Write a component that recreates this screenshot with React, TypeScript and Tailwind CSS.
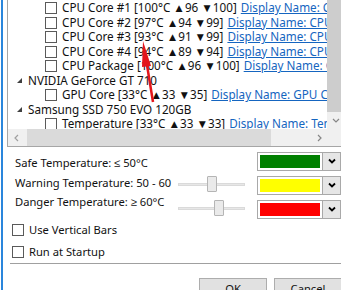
import type { ReactNode } from 'react';

type Row =
  | { kind: 'group'; label: string }
  | { kind: 'sensor'; label: string; link: string };

const rows: Row[] = [
  { kind: 'sensor', label: 'CPU Core #1 [100°C ▲96 ▼100]', link: 'Display Name: CPU Core #1' },
  { kind: 'sensor', label: 'CPU Core #2 [97°C ▲94 ▼99]', link: 'Display Name: CPU Core #2' },
  { kind: 'sensor', label: 'CPU Core #3 [93°C ▲91 ▼99]', link: 'Display Name: CPU Core #3' },
  { kind: 'sensor', label: 'CPU Core #4 [94°C ▲89 ▼94]', link: 'Display Name: CPU Core #4' },
  { kind: 'sensor', label: 'CPU Package [100°C ▲96 ▼100]', link: 'Display Name: CPU Package' },
  { kind: 'group', label: 'NVIDIA GeForce GT 710' },
  { kind: 'sensor', label: 'GPU Core [33°C ▲33 ▼35]', link: 'Display Name: GPU Core' },
  { kind: 'group', label: 'Samsung SSD 750 EVO 120GB' },
  { kind: 'sensor', label: 'Temperature [33°C ▲33 ▼33]', link: 'Display Name: Temperature' },
];

function CheckBox() {
  return <span className="block w-[12px] h-[12px] shrink-0 border border-[#5a5a5a] bg-white" />;
}

function Chevron({ className, dir = 'down' }: { className?: string; dir?: 'down' | 'left' | 'right' }) {
  const points = dir === 'down' ? '1,2 4,5 7,2' : dir === 'left' ? '5,1 2,4 5,7' : '3,1 6,4 3,7';
  return (
    <svg viewBox="0 0 8 8" className={className} fill="none" stroke="currentColor" strokeWidth="1.2">
      <polyline points={points} />
    </svg>
  );
}

function ColorPicker({ color }: { color: string }) {
  return (
    <div className="flex h-[20px]">
      <div className="w-[66px] h-full border border-[#a9a9a9] bg-white p-[2px]">
        <div className={`w-full h-full ${color}`} />
      </div>
      <div className="w-[18px] h-full border border-l-0 border-[#a9a9a9] bg-[#e6e6e6] flex items-center justify-center">
        <svg viewBox="0 0 8 8" className="w-[8px] h-[8px] text-black" fill="none" stroke="currentColor" strokeWidth="1.8">
          <polyline points="1,2.5 4,5.5 7,2.5" />
        </svg>
      </div>
    </div>
  );
}

function Slider({ offset }: { offset: string }) {
  return (
    <div className="relative h-[16px] w-[67px]">
      <div className="absolute left-0 right-0 top-[7px] h-[3px] bg-[#e7e7e7] border border-[#dadada]" />
      <div className={`relative h-[16px] w-[10px] ${offset} bg-[#eaeaea] border border-[#b5b5b5] rounded-[1px]`} />
    </div>
  );
}

function Option({ children }: { children: ReactNode }) {
  return (
    <div className="h-[22px] shrink-0 flex items-center pl-[9px]">
      <CheckBox />
      <span className="ml-[5px]">{children}</span>
    </div>
  );
}

export default function App() {
  return (
    <div className="relative w-[341px] h-[290px] overflow-hidden bg-white text-[11.2px] text-[#111] font-['Noto_Sans',sans-serif]">
      <div className="flex h-full">
        <div className="ml-[1px] w-[2px] h-full bg-[#2a86dc]" />
        <div className="flex-1 flex flex-col min-w-0">
          {/* sensor tree */}
          <div className="ml-[4px] w-[340px] h-[147px] border-l border-b border-[#a6a6a6] flex flex-col shrink-0">
            <div className="flex h-[129px]">
              <div className="w-[319px] overflow-hidden pt-[1px] whitespace-nowrap text-[11.7px]">
                {rows.map((r, i) =>
                  r.kind === 'group' ? (
                    <div key={i} className="h-[14.5px] flex items-center pl-[9px]">
                      <svg viewBox="0 0 5 5" className="w-[5px] h-[5px] text-[#404040]" fill="currentColor">
                        <polygon points="5,0 5,5 0,5" />
                      </svg>
                      <span className="ml-[6px] leading-none">{r.label}</span>
                    </div>
                  ) : (
                    <div key={i} className="h-[14.5px] flex items-center pl-[37px]">
                      <CheckBox />
                      <span className="ml-[5px] leading-none">{r.label}</span>
                      <span className="ml-[4px] leading-none text-[#1565c0] underline">{r.link}</span>
                    </div>
                  ),
                )}
              </div>
              <div className="w-[17px] flex flex-col bg-[#f0f0f0]">
                <div className="h-[112px] bg-[#cdcdcd]" />
                <div className="flex-1 flex items-center justify-center text-[#868686]">
                  <Chevron className="w-[8px] h-[8px]" />
                </div>
              </div>
            </div>
            <div className="flex h-[17px] bg-[#f0f0f0]">
              <div className="w-[319px] flex items-center">
                <div className="w-[17px] flex justify-center text-[#a0a0a0]">
                  <Chevron dir="left" className="w-[8px] h-[8px]" />
                </div>
                <div className="ml-[2px] w-[244px] h-full bg-[#dadada]" />
                <div className="ml-auto w-[17px] flex justify-center text-[#868686]">
                  <Chevron dir="right" className="w-[8px] h-[8px]" />
                </div>
              </div>
            </div>
          </div>

          {/* temperature thresholds */}
          <div className="flex h-[72px] shrink-0 whitespace-nowrap">
            <div className="w-[177px] pl-[12px] pt-[6px] overflow-hidden">
              <div className="leading-[19.5px]">Safe Temperature: ≤ 50°C</div>
              <div className="leading-[19.5px]">Warning Temperature: 50 - 60</div>
              <div className="leading-[19.5px]">Danger Temperature: ≥ 60°C</div>
            </div>
            <div className="w-[67px] pt-[4.5px] flex flex-col gap-[4.5px]">
              <div className="h-[20px]" />
              <div className="h-[20px] flex items-start">
                <Slider offset="ml-[29px]" />
              </div>
              <div className="h-[20px] flex items-start">
                <Slider offset="ml-[36px]" />
              </div>
            </div>
            <div className="ml-[12px] pt-[4.5px] flex flex-col gap-[4.5px]">
              <ColorPicker color="bg-[#008000]" />
              <ColorPicker color="bg-[#ffff00]" />
              <ColorPicker color="bg-[#ff0000]" />
            </div>
          </div>

          <Option>Use Vertical Bars</Option>
          <Option>Run at Startup</Option>

          <div className="ml-[7px] h-px bg-[#a0a0a0] shrink-0" />

          <div className="mt-[14px] pl-[196px] flex gap-[7px] shrink-0">
            <button className="w-[68px] h-[23px] shrink-0 bg-[#e1e1e1] border border-[#adadad]">OK</button>
            <button className="w-[68px] h-[23px] shrink-0 bg-[#e1e1e1] border border-[#adadad]">Cancel</button>
          </div>
        </div>
      </div>

      {/* red annotation arrow */}
      <svg className="absolute left-0 top-0 w-[341px] h-[290px] pointer-events-none" viewBox="0 0 341 290">
        <line x1="153" y1="102" x2="146.5" y2="62" stroke="#e3161b" strokeWidth="2.5" />
        <polygon points="143,41 151,66 142,67" fill="#e3161b" />
      </svg>
    </div>
  );
}
